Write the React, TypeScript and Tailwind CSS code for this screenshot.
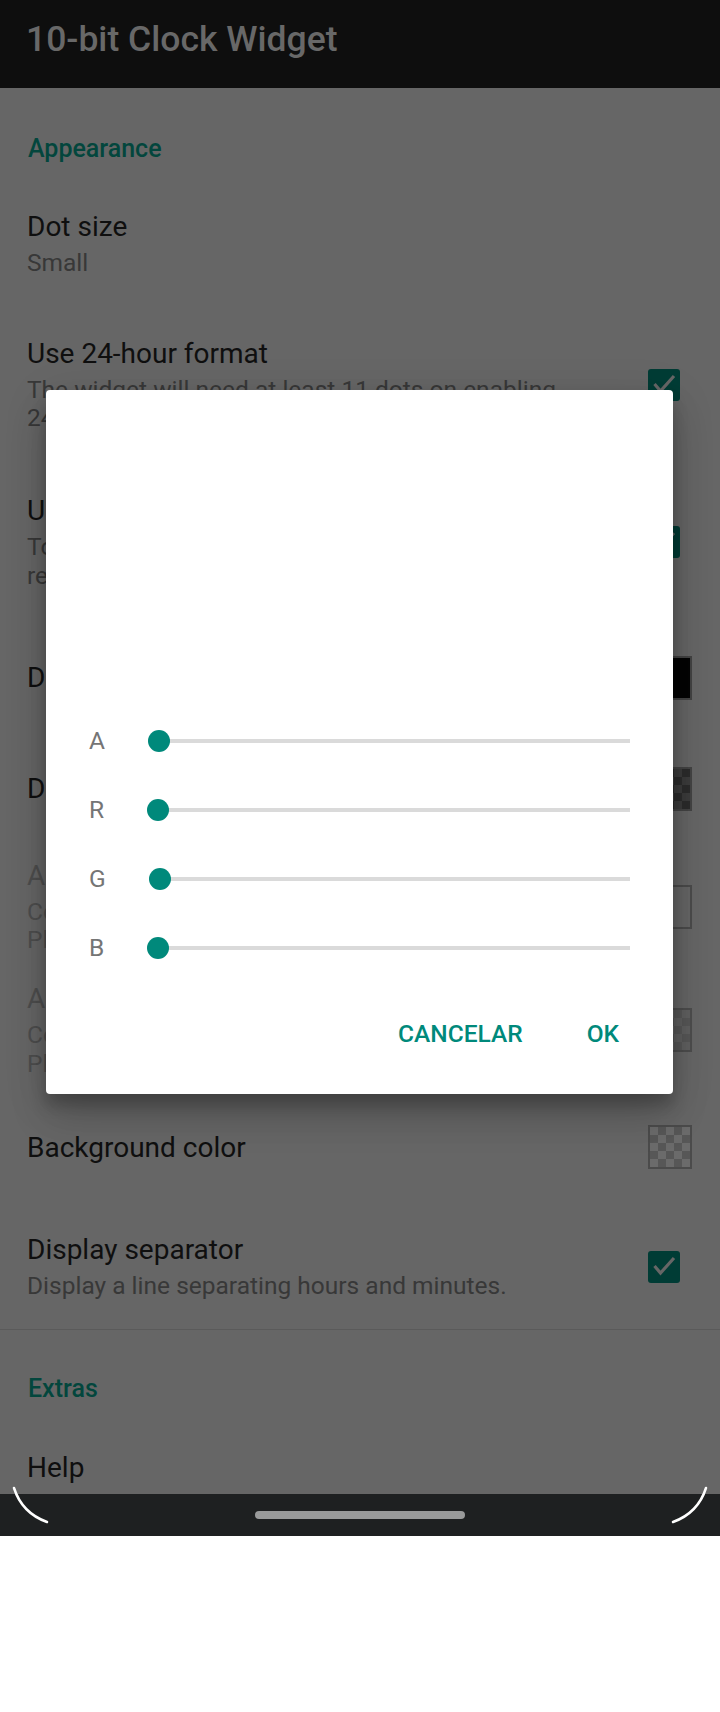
import type { ReactNode } from "react"

const Checkbox = () => (
  <div className="w-[32px] h-[32px] rounded-[3px] bg-[#003c35] flex items-center justify-center">
    <svg width="32" height="32" viewBox="0 0 32 32" fill="none">
      <path d="M6.5 15 L12.5 22 L26 7" stroke="#666666" strokeWidth="3.2" strokeLinecap="butt" strokeLinejoin="miter" />
    </svg>
  </div>
)

const Checker = ({ light, dark, border }: { light: string; dark: string; border: string }) => (
  <div className={`w-[44px] h-[44px] border-2 ${border} grid grid-cols-5`}>
    {Array.from({ length: 25 }).map((_, i) => (
      <div key={i} className={(Math.floor(i / 5) + (i % 5)) % 2 === 0 ? light : dark} />
    ))}
  </div>
)

type Pref = {
  title: string
  summary?: string[]
  widget?: ReactNode
  gap: string
  disabled?: boolean
}

const prefs: Pref[] = [
  { title: "Dot size", summary: ["Small"], gap: "mt-[47px]" },
  {
    title: "Use 24-hour format",
    summary: ["The widget will need at least 11 dots on enabling", "24-hour format."],
    widget: <Checkbox />,
    gap: "mt-[59px]",
  },
  {
    title: "Use system accent colors",
    summary: ["To apply the change the widget needs to be", "removed and added again."],
    widget: <Checkbox />,
    gap: "mt-[61px]",
  },
  {
    title: "Dot color (on)",
    widget: <div className="w-[44px] h-[44px] border-2 border-[#434343] bg-[#050505]" />,
    gap: "mt-[65px]",
  },
  {
    title: "Dot color (off)",
    widget: <Checker light="bg-[#2c2c2c]" dark="bg-[#3c3c3c]" border="border-[#444444]" />,
    gap: "mt-[67px]",
  },
  {
    title: "Accent color (on)",
    summary: ["Color of the separator dots.", "Please enable the separator first."],
    widget: <div className="w-[44px] h-[44px] border-2 border-[#4b4b4b]" />,
    gap: "mt-[48px]",
    disabled: true,
  },
  {
    title: "Accent color (off)",
    summary: ["Color of the separator dots when off.", "Please enable the separator first."],
    widget: <Checker light="bg-[#606060]" dark="bg-[#575757]" border="border-[#4d4d4d]" />,
    gap: "mt-[27px]",
    disabled: true,
  },
  {
    title: "Background color",
    widget: <Checker light="bg-[#6b6b6b]" dark="bg-[#575757]" border="border-[#4b4b4b]" />,
    gap: "mt-[47px]",
  },
  {
    title: "Display separator",
    summary: ["Display a line separating hours and minutes."],
    widget: <Checkbox />,
    gap: "mt-[64px]",
  },
]

const Slider = ({ label }: { label: string }) => (
  <div className="h-[69px] flex items-center pl-[43px] pr-[43px]">
    <span className="text-[24.5px] leading-[29px] text-[#757575]">{label}</span>
    <div className="relative ml-[54px] flex-1 h-[22px]">
      <div className="absolute left-0 right-0 top-[9px] h-[4px] bg-[#dadada]" />
      <div className="absolute left-[-11px] top-0 w-[22px] h-[22px] rounded-full bg-[#00897b]" />
    </div>
  </div>
)

const App = () => {
  return (
    <div className="relative w-[720px] h-[1712px] bg-white font-[Roboto,sans-serif] overflow-hidden">
      <div className="relative h-[1494px] overflow-hidden bg-[#666666]">
        {/* Toolbar */}
        <div className="h-[88px] bg-[#0e0e0e] pl-[26px] pt-[19px]">
          <h1 className="text-[35.5px] leading-[41px] font-medium text-[#686868]">10-bit Clock Widget</h1>
        </div>

        {/* Appearance */}
        <div className="mt-[46px] pl-[28px] text-[25px] leading-[29px] font-medium text-[#03463d]">Appearance</div>

        {prefs.map((p) => (
          <div key={p.title} className={`${p.gap} flex items-center justify-between pl-[27px] pr-[25px]`}>
            <div className="whitespace-nowrap">
              <div className={`text-[28px] leading-[33px] ${p.disabled ? "text-[#4e4e4e]" : "text-[#0f0f0f]"}`}>
                {p.title}
              </div>
              {p.summary && (
                <div className="mt-[6px]">
                  {p.summary.map((line) => (
                    <div
                      key={line}
                      className={`text-[24.5px] leading-[28.7px] ${p.disabled ? "text-[#4e4e4e]" : "text-[#383838]"}`}
                    >
                      {line}
                    </div>
                  ))}
                </div>
              )}
            </div>
            {p.widget && <div className="w-[47px] flex">{p.widget}</div>}
          </div>
        ))}

        <div className="mt-[28px] h-[1px] bg-[#5a5a5a]" />

        {/* Extras */}
        <div className="mt-[44px] pl-[28px] text-[25px] leading-[29px] font-medium text-[#03463d]">Extras</div>
        <div className="mt-[48px] pl-[27px] text-[28px] leading-[33px] text-[#0f0f0f]">Help</div>

        {/* Color picker dialog */}
        <div className="absolute left-[46px] top-[390px] w-[627px] h-[704px] rounded-[4px] bg-white flex flex-col shadow-[0_11px_15px_rgba(0,0,0,0.2),0_24px_38px_rgba(0,0,0,0.14),0_9px_46px_rgba(0,0,0,0.12)]">
          <div className="h-[316px]" />
          <Slider label="A" />
          <Slider label="R" />
          <Slider label="G" />
          <Slider label="B" />
          <div className="h-[103px] flex items-center justify-end gap-[64px] pr-[54px] text-[24.5px] leading-[29px] font-medium text-[#00897b]">
            <span>CANCELAR</span>
            <span>OK</span>
          </div>
        </div>
      </div>

      {/* Navigation bar */}
      <div className="h-[42px] bg-[#1e2021] flex items-center justify-center">
        <div className="w-[210px] h-[8px] rounded-full bg-[#999a9a]" />
      </div>

      {/* Rounded screen corners */}
      <svg className="absolute left-0 top-[1480px]" width="720" height="50" viewBox="0 0 720 50" fill="none">
        <path d="M14 8 Q22 33 47 42" stroke="white" strokeWidth="2.5" strokeLinecap="round" />
        <path d="M706 8 Q698 33 673 42" stroke="white" strokeWidth="2.5" strokeLinecap="round" />
      </svg>
    </div>
  )
}

export default App
